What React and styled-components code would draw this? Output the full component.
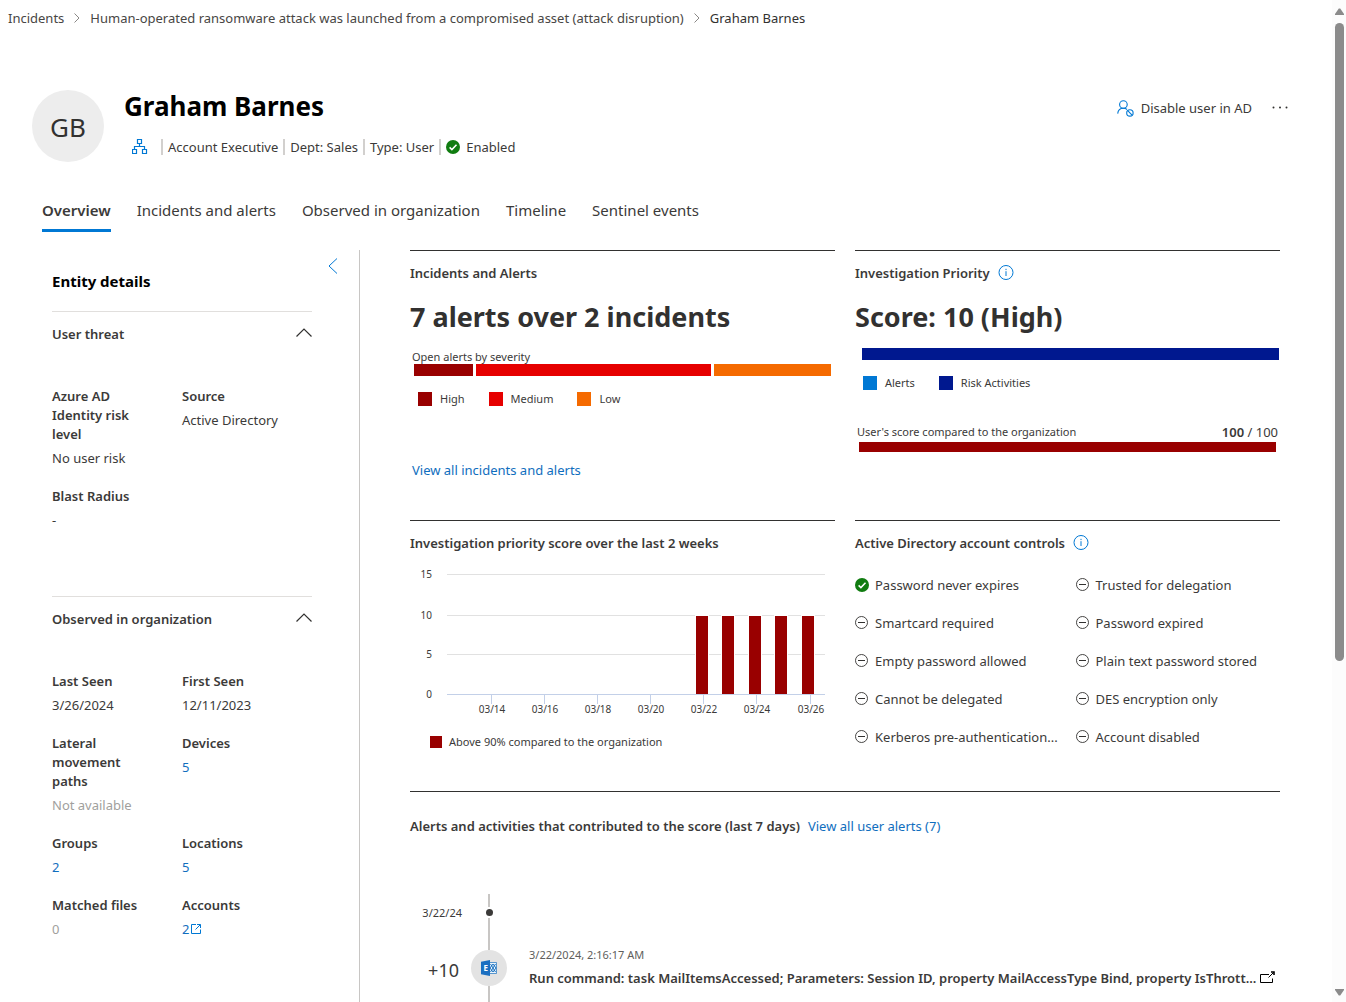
import React from "react";
import styled, { createGlobalStyle } from "styled-components";

const c = {
  text: "#3b3a39",
  strong: "#323130",
  link: "#106ebe",
  accent: "#0078d4",
  muted: "#a19f9d",
  line: "#e1dfdd",
  high: "#990000",
  medium: "#e60000",
  low: "#f56a00",
  risk: "#00188f",
  green: "#107c10",
};

const Global = createGlobalStyle`
  *, *::before, *::after { box-sizing: border-box; }
  body { margin: 0; background: #fff; color: ${c.text}; font: 400 13px/20px "Noto Sans", "Open Sans", sans-serif; }
  h1, h2, h3, p, dl, dt, dd, ol, ul { margin: 0; padding: 0; }
  ol, ul { list-style: none; }
  button { margin: 0; padding: 0; border: 0; background: none; color: inherit; font: inherit; cursor: pointer; }
  svg { display: block; flex: none; }
`;

const Shell = styled.div`
  display: flex;
  height: 100vh;
`;
const Page = styled.div`
  flex: 1;
  min-width: 0;
  overflow: auto;
  scrollbar-width: none;
`;
const ScrollTrack = styled.div`
  flex: none;
  width: 14px;
  background: #fcfcfc;
  display: flex;
  flex-direction: column;
  align-items: flex-end;
  justify-content: space-between;
  padding: 8px 2px 6px 0;
`;
const ScrollTop = styled.div`
  display: flex;
  flex-direction: column;
  gap: 8px;
  flex: 1;
`;
const Thumb = styled.div`
  width: 9px;
  height: 65%;
  border-radius: 5px;
  background: #8b8b8b;
`;

const Crumbs = styled.nav`
  display: flex;
  align-items: center;
  gap: 10px;
  height: 36px;
  padding: 0 8px;
`;
const Crumb = styled.a`
  color: ${(p) => (p.$current ? c.strong : "#484644")};
  text-decoration: none;
  white-space: nowrap;
`;

const Header = styled.header`
  display: flex;
  align-items: flex-start;
  gap: 20px;
  padding: 54px 44px 0 32px;
`;
const Avatar = styled.div`
  width: 72px;
  height: 72px;
  border-radius: 50%;
  background: #ededed;
  color: ${c.strong};
  font-size: 26px;
  line-height: 74px;
  text-align: center;
`;
const Identity = styled.div`
  flex: 1;
  min-width: 0;
`;
const Name = styled.h1`
  color: #000;
  font-size: 26px;
  font-weight: 700;
  line-height: 32px;
`;
const Meta = styled.div`
  display: flex;
  align-items: center;
  height: 20px;
  margin-top: 15px;
  padding-left: 8px;
`;
const MetaItem = styled.span`
  display: flex;
  align-items: center;
  gap: 6px;
  height: 16px;
  padding: 0 5px;
  border-left: 2px solid #d2d0ce;
  white-space: nowrap;
`;
const OrgButton = styled.button`
  margin-right: 13px;
`;
const Actions = styled.div`
  display: flex;
  align-items: center;
  gap: 20px;
  padding-top: 8px;
`;
const ActionButton = styled.button`
  display: flex;
  align-items: center;
  gap: 7px;
`;

const Tabs = styled.div`
  display: flex;
  gap: 26px;
  padding: 36px 42px 0;
`;
const Tab = styled.button`
  height: 34px;
  padding-bottom: 8px;
  border-bottom: 3px solid ${(p) => (p.$active ? c.accent : "transparent")};
  font-size: 15px;
  line-height: 20px;
  font-weight: ${(p) => (p.$active ? 600 : 400)};
  white-space: nowrap;
`;

const Body = styled.div`
  display: flex;
  padding-top: 18px;
`;
const Sidebar = styled.aside`
  flex: none;
  width: 360px;
  padding: 0 21px 0 52px;
  border-right: 1px solid #c8c6c4;
`;
const SideTop = styled.div`
  display: flex;
  justify-content: space-between;
  align-items: flex-start;
  padding-top: 8px;
`;
const SideTitle = styled.h2`
  padding: 13px 0 20px;
  color: #000;
  font-size: 15px;
  font-weight: 700;
  line-height: 20px;
`;
const Section = styled.section`
  width: 260px;
  padding-bottom: 66px;
  border-top: 1px solid ${c.line};
`;
const SectionToggle = styled.button`
  display: flex;
  align-items: center;
  justify-content: space-between;
  width: 100%;
  height: 44px;
  font-weight: 600;
`;
const Facts = styled.dl`
  display: grid;
  grid-template-columns: 1fr 1fr;
  row-gap: 19px;
  margin-top: 31px;
  line-height: 19px;
`;
const FactLabel = styled.dt`
  width: 96px;
  margin-bottom: 5px;
  font-weight: 600;
`;
const FactValue = styled.dd`
  display: flex;
  align-items: center;
  gap: 2px;
  color: ${(p) => (p.$muted ? c.muted : c.text)};
`;
const Link = styled.a`
  display: inline-flex;
  align-items: center;
  gap: 2px;
  color: ${c.link};
  font-weight: 400;
  text-decoration: none;
`;

const Main = styled.main`
  flex: 1;
  min-width: 0;
  padding: 0 52px 60px 50px;
`;
const Cards = styled.div`
  display: grid;
  grid-template-columns: 1fr 1fr;
  grid-template-rows: 270px 271px;
  column-gap: 20px;
`;
const Card = styled.section`
  min-width: 0;
  padding-top: 12px;
  border-top: 1px solid ${c.strong};
`;
const CardTitle = styled.h3`
  display: flex;
  align-items: center;
  gap: 8px;
  font-size: 13px;
  font-weight: 600;
  line-height: 20px;
`;
const Big = styled.p`
  margin-top: 16px;
  color: ${c.strong};
  font-size: 27px;
  font-weight: 700;
  line-height: 36px;
`;
const Small = styled.span`
  font-size: 11px;
  line-height: 14px;
`;
const Severity = styled.div`
  display: flex;
  flex-direction: column;
  padding: 15px 4px 0 2px;
`;
const Stack = styled.div`
  display: flex;
  gap: 3px;
  margin-left: 2px;
`;
const Segment = styled.div`
  flex: ${(p) => p.$share};
  height: ${(p) => p.$h || 12}px;
  background: ${(p) => p.$color};
`;
const Legend = styled.ul`
  display: flex;
  gap: 24px;
  padding: 16px 0 0 8px;
`;
const LegendItem = styled.li`
  display: flex;
  align-items: center;
  gap: 8px;
  font-size: 11px;
  line-height: 14px;
`;
const Swatch = styled.span`
  width: ${(p) => p.$size || 14}px;
  height: ${(p) => p.$size || 14}px;
  background: ${(p) => p.$color};
`;
const CardLink = styled.div`
  padding: 54px 2px 0;
`;
const Priority = styled.div`
  padding: 13px 1px 0 7px;
`;
const Compare = styled.div`
  padding: 32px 4px 0;
`;
const CompareHead = styled.div`
  display: flex;
  justify-content: space-between;
  align-items: center;
  height: 20px;
  margin: 0 -2px;
  b { font-weight: 600; }
`;

const Chart = styled.svg`
  width: 100%;
  height: auto;
  margin-top: 11px;
  font-size: 10px;
  fill: ${c.text};
`;
const ChartLegend = styled.div`
  display: flex;
  align-items: center;
  gap: 7px;
  padding: 14px 20px 0;
`;

const Controls = styled.ul`
  display: grid;
  grid-template-columns: 1fr 1fr;
  gap: 18px 16px;
  margin-top: 22px;
`;
const Control = styled.li`
  display: flex;
  align-items: center;
  gap: 6px;
  min-width: 0;
  white-space: nowrap;
`;

const Activity = styled(Card)`
  padding-top: 24px;
`;
const Timeline = styled.ol`
  margin-top: 58px;
`;
const Entry = styled.li`
  display: grid;
  grid-template-columns: 52px 36px minmax(0, 1fr);
  column-gap: 9px;
`;
const DateLabel = styled.span`
  padding-top: 9px;
  font-size: 11px;
  text-align: right;
`;
const Points = styled.span`
  padding: 20px 3px 0 0;
  font-size: 18px;
  text-align: right;
`;
const Rail = styled.div`
  display: flex;
  flex-direction: column;
  align-items: center;
`;
const RailLine = styled.div`
  width: 2px;
  background: #c8c6c4;
  ${(p) => (p.$h ? `height: ${p.$h}px;` : "flex: 1;")}
`;
const Dot = styled.div`
  width: 7px;
  height: 7px;
  margin: 2px 0;
  border-radius: 50%;
  background: ${c.text};
`;
const Badge = styled.div`
  display: grid;
  place-items: center;
  width: 36px;
  height: 36px;
  border-radius: 50%;
  background: #e3e3e3;
`;
const Event = styled.div`
  display: flex;
  flex-direction: column;
  gap: 3px;
  padding: 5px 0 26px 13px;
`;
const EventTime = styled.time`
  color: #605e5c;
  font-size: 11px;
`;
const EventTitle = styled.div`
  display: flex;
  align-items: center;
  gap: 4px;
  font-weight: 600;
  white-space: nowrap;
`;

const Chevron = ({ d, w, h, color, sw = 1 }) => (
  <svg width={w} height={h} viewBox={`0 0 ${w} ${h}`} fill="none" stroke={color} strokeWidth={sw} aria-hidden="true">
    <path d={d} />
  </svg>
);
const CrumbArrow = () => <Chevron w={6} h={10} d="M.5.5 5 5 .5 9.5" color="#8a8886" />;
const UpArrow = () => <Chevron w={16} h={12} d="M.5 8.5 8 1l7.5 7.5" color={c.strong} sw={1.2} />;

const OrgIcon = () => (
  <svg width="16" height="16" viewBox="0 0 16 16" fill="none" stroke={c.accent} strokeWidth="1.2" aria-hidden="true">
    <path d="M5.500.5h4v4h-4zM.5 10.500h4v4h-4zM10.500 10.500h4v4h-4zM7.500 4.500v3M2.500 10.500v-3h10v3" />
  </svg>
);
const CheckIcon = () => (
  <svg width="14" height="14" viewBox="0 0 14 14" aria-hidden="true">
    <circle cx="7" cy="7" r="7" fill={c.green} />
    <path d="m3.6 7.4 2.3 2.2 4.6-4.8" fill="none" stroke="#fff" strokeWidth="1.5" />
  </svg>
);
const MinusIcon = () => (
  <svg width="14" height="14" viewBox="0 0 14 14" fill="none" stroke={c.strong} aria-hidden="true">
    <circle cx="6.5" cy="6.5" r="6" strokeWidth=".9" />
    <path d="M3 6.5h7" />
  </svg>
);
const InfoIcon = () => (
  <svg width="16" height="16" viewBox="0 0 16 16" fill="none" stroke={c.accent} aria-hidden="true">
    <circle cx="8" cy="7.5" r="7" />
    <path d="M8 6.200v4.800M8 3.800v1.300" />
  </svg>
);
const UserBlockedIcon = () => (
  <svg width="17" height="17" viewBox="0 0 17 17" fill="none" stroke={c.accent} strokeWidth="1.1" aria-hidden="true">
    <circle cx="6.400" cy="4.500" r="3.800" />
    <path d="M.7 13.600c.3-3.200 2.300-5.300 5.700-5.300 1.500 0 2.700.400 3.600 1.200" />
    <circle cx="12.900" cy="12.900" r="3.200" />
    <path d="m10.700 10.700 4.400 4.400" />
  </svg>
);
const MoreIcon = () => (
  <svg width="16" height="16" viewBox="0 0 16 16" fill={c.strong} aria-hidden="true">
    <circle cx="1.500" cy="7.500" r="1" />
    <circle cx="8" cy="7.500" r="1" />
    <circle cx="14.500" cy="7.500" r="1" />
  </svg>
);
const OpenIcon = () => (
  <svg width="11" height="11" viewBox="0 0 11 11" fill="none" stroke={c.accent} aria-hidden="true">
    <path d="M5 .5H.5v9h9V5.500M6 .5h3.500V4M9.300.7 4.500 5.500" />
  </svg>
);
const PopOutIcon = () => (
  <svg width="15" height="15" viewBox="0 0 15 15" fill="none" stroke="#000" aria-hidden="true">
    <path d="M9 3.500H.5v8h12V7.500M8.500 6.500l5-5" />
    <path d="M11 1h3v3" strokeWidth="1.600" />
  </svg>
);
const ExchangeIcon = () => (
  <svg width="16" height="16" viewBox="0 0 16 16" aria-hidden="true">
    <path d="M8 2.500h7.500v11H8z" fill="#eaf3fb" stroke="#1b72c0" strokeWidth=".7" />
    <path d="m9.500 4 5 8m0-8-5 8M9 8l3-4 3 4-3 4z" fill="none" stroke="#1b72c0" strokeWidth="1" />
    <path d="M0 1.800 9 0v16L0 14.200z" fill="#1b6fc1" />
    <text x="2.500" y="11" fontSize="8" fontWeight="700" fill="#fff">E</text>
  </svg>
);

const tabs = ["Overview", "Incidents and alerts", "Observed in organization", "Timeline", "Sentinel events"];

const threatFacts = [
  { label: "Azure AD Identity risk level", value: "No user risk" },
  { label: "Source", value: "Active Directory" },
  { label: "Blast Radius", value: "-" },
];
const orgFacts = [
  { label: "Last Seen", value: "3/26/2024" },
  { label: "First Seen", value: "12/11/2023" },
  { label: "Lateral movement paths", value: "Not available", muted: true },
  { label: "Devices", value: "5", link: true },
  { label: "Groups", value: "2", link: true },
  { label: "Locations", value: "5", link: true },
  { label: "Matched files", value: "0", muted: true },
  { label: "Accounts", value: "2", link: true, external: true },
];
const controls = [
  ["Password never expires", true],
  ["Trusted for delegation"],
  ["Smartcard required"],
  ["Password expired"],
  ["Empty password allowed"],
  ["Plain text password stored"],
  ["Cannot be delegated"],
  ["DES encryption only"],
  ["Kerberos pre-authentication..."],
  ["Account disabled"],
];

const FactSection = ({ title, facts }) => (
  <Section>
    <SectionToggle aria-expanded="true">
      {title}
      <UpArrow />
    </SectionToggle>
    <Facts>
      {facts.map((f) => (
        <div key={f.label}>
          <FactLabel>{f.label}</FactLabel>
          <FactValue $muted={f.muted}>
            {f.link ? (
              <Link href="#">
                {f.value}
                {f.external && <OpenIcon />}
              </Link>
            ) : (
              f.value
            )}
          </FactValue>
        </div>
      ))}
    </Facts>
  </Section>
);

const LegendList = ({ items, ...rest }) => (
  <Legend {...rest}>
    {items.map(([label, color]) => (
      <LegendItem key={label}>
        <Swatch $color={color} />
        {label}
      </LegendItem>
    ))}
  </Legend>
);

const PriorityLegend = styled(LegendList)`
  padding-left: 1px;
`;

const gridLines = [[15, 0], [10, 41], [5, 80]];
const days = [["03/14", 81], ["03/16", 134], ["03/18", 187], ["03/20", 240], ["03/22", 293], ["03/24", 346], ["03/26", 400]];
const bars = [286, 312, 339, 365, 392];

const ScoreChart = () => (
  <Chart viewBox="0 0 425 157" role="img" aria-label="Investigation priority score by day">
    {gridLines.map(([v, y]) => (
      <g key={v}>
        <path d={`M37 ${y + 10.5}h378`} stroke="#e1e1e1" />
        <text x="22" y={y + 14} textAnchor="end">{v}</text>
      </g>
    ))}
    <text x="22" y="134" textAnchor="end">0</text>
    {bars.map((x) => (
      <rect key={x} x={x - 1} y="51" width="14" height="79" fill="#fff" />
    ))}
    {bars.map((x) => (
      <rect key={x} x={x} y="52" width="12" height="78" fill={c.high} />
    ))}
    <path d="M37 130.500h378" stroke="#c3d0e8" />
    {days.map(([label, x]) => (
      <g key={label}>
        <path d={`M${x + 0.5} 131v9`} stroke="#c3d0e8" />
        <text x={x + 1} y="149" textAnchor="middle">{label}</text>
      </g>
    ))}
  </Chart>
);

export default function App() {
  return (
    <Shell>
      <Global />
      <Page>
        <Crumbs aria-label="Breadcrumb">
          <Crumb href="#">Incidents</Crumb>
          <CrumbArrow />
          <Crumb href="#">Human-operated ransomware attack was launched from a compromised asset (attack disruption)</Crumb>
          <CrumbArrow />
          <Crumb href="#" $current aria-current="page">Graham Barnes</Crumb>
        </Crumbs>

        <Header>
          <Avatar>GB</Avatar>
          <Identity>
            <Name>Graham Barnes</Name>
            <Meta>
              <OrgButton aria-label="Organization chart"><OrgIcon /></OrgButton>
              <MetaItem>Account Executive</MetaItem>
              <MetaItem>Dept: Sales</MetaItem>
              <MetaItem>Type: User</MetaItem>
              <MetaItem><CheckIcon />Enabled</MetaItem>
            </Meta>
          </Identity>
          <Actions>
            <ActionButton><UserBlockedIcon />Disable user in AD</ActionButton>
            <ActionButton aria-label="More actions"><MoreIcon /></ActionButton>
          </Actions>
        </Header>

        <Tabs role="tablist">
          {tabs.map((t, i) => (
            <Tab key={t} role="tab" aria-selected={i === 0} $active={i === 0}>{t}</Tab>
          ))}
        </Tabs>

        <Body>
          <Sidebar>
            <SideTop>
              <SideTitle>Entity details</SideTitle>
              <button aria-label="Collapse entity details">
                <Chevron w={10} h={16} d="M9 .5 1 8l8 7.500" color={c.accent} />
              </button>
            </SideTop>
            <FactSection title="User threat" facts={threatFacts} />
            <FactSection title="Observed in organization" facts={orgFacts} />
          </Sidebar>

          <Main>
            <Cards>
              <Card>
                <CardTitle>Incidents and Alerts</CardTitle>
                <Big>7 alerts over 2 incidents</Big>
                <Severity>
                  <Small>Open alerts by severity</Small>
                  <Stack>
                    <Segment $share={1} $color={c.high} />
                    <Segment $share={4} $color={c.medium} />
                    <Segment $share={2} $color={c.low} />
                  </Stack>
                </Severity>
                <LegendList items={[["High", c.high], ["Medium", c.medium], ["Low", c.low]]} />
                <CardLink><Link href="#">View all incidents and alerts</Link></CardLink>
              </Card>

              <Card>
                <CardTitle>Investigation Priority <InfoIcon /></CardTitle>
                <Big>Score: 10 (High)</Big>
                <Priority>
                  <Segment $color={c.risk} />
                  <PriorityLegend items={[["Alerts", c.accent], ["Risk Activities", c.risk]]} />
                </Priority>
                <Compare>
                  <CompareHead>
                    <Small>User's score compared to the organization</Small>
                    <span><b>100</b> / 100</span>
                  </CompareHead>
                  <Segment $color={c.high} $h={10} />
                </Compare>
              </Card>

              <Card>
                <CardTitle>Investigation priority score over the last 2 weeks</CardTitle>
                <ScoreChart />
                <ChartLegend>
                  <Swatch $color={c.high} $size={12} />
                  <Small>Above 90% compared to the organization</Small>
                </ChartLegend>
              </Card>

              <Card>
                <CardTitle>Active Directory account controls <InfoIcon /></CardTitle>
                <Controls>
                  {controls.map(([label, on]) => (
                    <Control key={label}>
                      {on ? <CheckIcon /> : <MinusIcon />}
                      <span>{label}</span>
                    </Control>
                  ))}
                </Controls>
              </Card>
            </Cards>

            <Activity>
              <CardTitle>
                Alerts and activities that contributed to the score (last 7 days)
                <Link href="#">View all user alerts (7)</Link>
              </CardTitle>
              <Timeline>
                <Entry>
                  <DateLabel>3/22/24</DateLabel>
                  <Rail>
                    <RailLine $h={13} />
                    <Dot />
                    <RailLine $h={22} />
                  </Rail>
                </Entry>
                <Entry>
                  <Points>+10</Points>
                  <Rail>
                    <RailLine $h={10} />
                    <Badge><ExchangeIcon /></Badge>
                    <RailLine />
                  </Rail>
                  <Event>
                    <EventTime>3/22/2024, 2:16:17 AM</EventTime>
                    <EventTitle>
                      <span>Run command: task MailItemsAccessed; Parameters: Session ID, property MailAccessType Bind, property IsThrott...</span>
                      <PopOutIcon />
                    </EventTitle>
                  </Event>
                </Entry>
              </Timeline>
            </Activity>
          </Main>
        </Body>
      </Page>

      <ScrollTrack aria-hidden="true">
        <ScrollTop>
          <svg width="9" height="7" viewBox="0 0 9 7" fill="#8b8b8b"><path d="M3.800.5h1.400L9 6v1H0V6z" /></svg>
          <Thumb />
        </ScrollTop>
        <svg width="9" height="7" viewBox="0 0 9 7" fill="#8b8b8b"><path d="M3.800 6.500h1.400L9 1V0H0v1z" /></svg>
      </ScrollTrack>
    </Shell>
  );
}
